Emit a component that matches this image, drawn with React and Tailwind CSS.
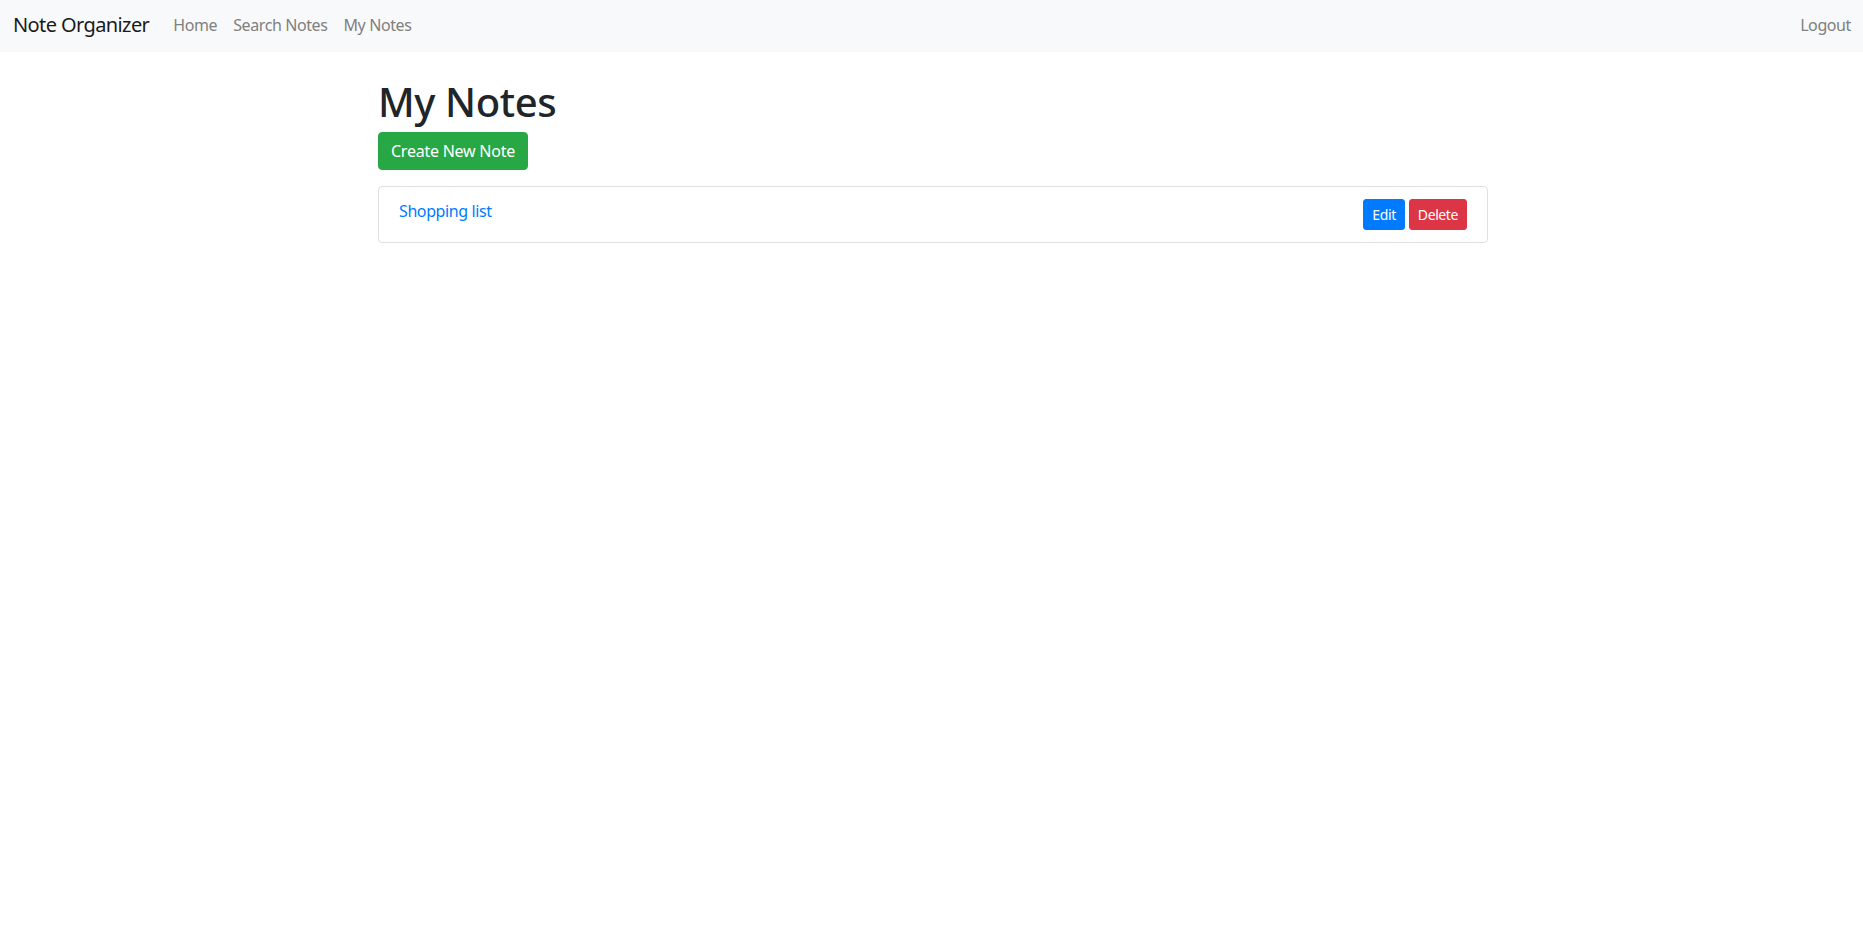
export default function App() {
  return (
    <div className="min-h-screen bg-white font-['Noto_Sans',sans-serif] tracking-[-0.025em] text-[#212529]">
      {/* Navbar */}
      <nav className="flex items-center h-[52px] bg-[#f8f9fa] pl-[13px] pr-[4px] pb-[2px]">
        <a href="#" className="text-[20px] tracking-[-0.03em] text-[#1a1a1a] mr-[16px] leading-[30px]">Note Organizer</a>
        <div className="flex items-center text-[16px] text-[#808080]">
          <a href="#" className="px-[8px] leading-[24px]">Home</a>
          <a href="#" className="px-[8px] leading-[24px]">Search Notes</a>
          <a href="#" className="px-[8px] leading-[24px]">My Notes</a>
        </div>
        <div className="ml-auto text-[16px] text-[#808080]">
          <a href="#" className="px-[8px] leading-[24px]">Logout</a>
        </div>
      </nav>

      {/* Content */}
      <div className="w-[1113px] mx-auto pl-[3px] pt-[24px]">
        <h1 className="text-[40px] font-medium leading-[48px] pt-[2px] mb-[6px]">My Notes</h1>
        <button className="h-[38px] px-[12px] rounded-[4px] bg-[#28a745] border border-[#28a745] text-white text-[16px] leading-[24px] tracking-[-0.015em]">
          Create New Note
        </button>
        <ul className="mt-[16px] border border-[rgba(0,0,0,0.125)] rounded-[4px]">
          <li className="flex items-start justify-between px-[20px] py-[12px]">
            <a href="#" className="text-[16px] leading-[24px] text-[#007bff]">Shopping list</a>
            <div className="flex gap-[4px]">
              <button className="h-[31px] px-[8px] rounded-[3px] bg-[#007bff] border border-[#007bff] text-white text-[14px] leading-[21px]">Edit</button>
              <button className="h-[31px] px-[8px] rounded-[3px] bg-[#dc3545] border border-[#dc3545] text-white text-[14px] leading-[21px]">Delete</button>
            </div>
          </li>
        </ul>
      </div>
    </div>
  );
}
